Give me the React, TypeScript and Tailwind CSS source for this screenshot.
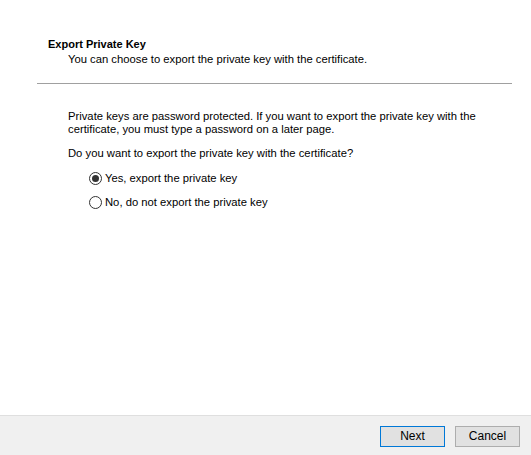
export default function App() {
  return (
    <div className="w-[531px] h-[455px] flex flex-col bg-white text-black text-[11.25px] leading-[13px] font-['Liberation_Sans',Arial,sans-serif]">
      {/* Header */}
      <div className="pt-[38px] pl-[48px]">
        <div className="font-bold text-[11px]">Export Private Key</div>
        <div className="mt-[2px] ml-[20px]">You can choose to export the private key with the certificate.</div>
      </div>
      <div className="mt-[17px] ml-[37px] mr-[19px] h-px bg-[#a0a0a0]" />

      {/* Body */}
      <div className="flex-1 pl-[68px] pt-[26px]">
        <p>
          Private keys are password protected. If you want to export the private key with the
          <br />
          certificate, you must type a password on a later page.
        </p>
        <p className="mt-[11px]">Do you want to export the private key with the certificate?</p>
        <div className="mt-[12px] ml-[21px] flex flex-col gap-[11px]">
          <label className="flex items-center gap-[3px]">
            <span className="w-[13px] h-[13px] rounded-full border border-[#333333] bg-white flex items-center justify-center">
              <span className="w-[7px] h-[7px] rounded-full bg-[#333333]" />
            </span>
            <span>Yes, export the private key</span>
          </label>
          <label className="flex items-center gap-[3px]">
            <span className="w-[13px] h-[13px] rounded-full border border-[#333333] bg-white" />
            <span>No, do not export the private key</span>
          </label>
        </div>
      </div>

      {/* Footer */}
      <div className="h-[40px] border-t border-[#dfdfdf] bg-[#f0f0f0] flex justify-end items-start gap-[10px] pt-[10px] pr-[11px]">
        <button className="w-[65px] h-[21px] border border-[#0078d7] bg-[#e1e1e1] text-[12px] leading-[19px]">
          Next
        </button>
        <button className="w-[65px] h-[21px] border border-[#adadad] bg-[#e1e1e1] text-[12px] leading-[19px]">
          Cancel
        </button>
      </div>
    </div>
  );
}
